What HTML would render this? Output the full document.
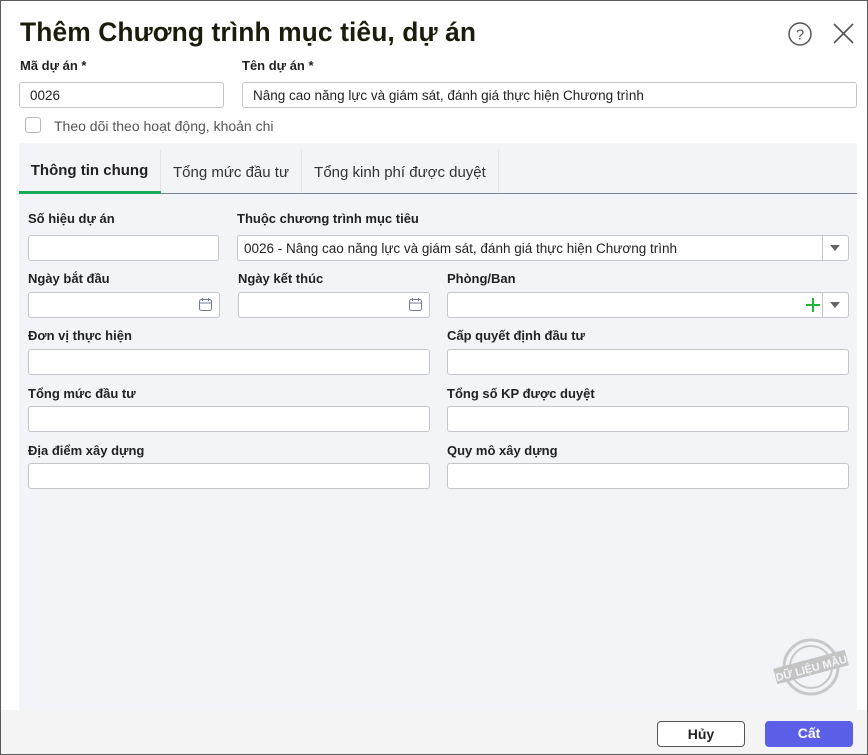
<!DOCTYPE html>
<html><head><meta charset="utf-8"><style>
*{box-sizing:border-box;margin:0;padding:0}
body{width:868px;height:755px;overflow:hidden;background:#fff;font-family:"Liberation Sans",Arial,sans-serif;color:#1f1f1f;position:relative}
.frame{position:absolute;left:0;top:0;width:868px;height:755px;border:1px solid #5a5a5a}
.a{position:absolute}
.t{position:absolute;font-size:26.4px;font-weight:bold;left:20px;top:17px;color:#1c1c0c;letter-spacing:.1px}
.l{position:absolute;font-size:13px;font-weight:bold;color:#222}
.i{position:absolute;height:26px;background:#fff;border:1px solid #c4c6cc;border-radius:3px;font-size:13.5px;padding:5px 10px;color:#222;white-space:nowrap;overflow:hidden}
.panel{position:absolute;left:19px;top:143px;width:838px;height:567px;background:#f3f4f8}
.tab{position:absolute;top:150px;height:44px;font-size:15px;color:#333;padding-top:12px;text-align:center;border-right:1px solid #e2e4ea}
.btn{position:absolute;top:721px;width:88px;height:26px;border-radius:4px;font-size:14px;font-weight:bold;text-align:center;line-height:24px}
</style></head><body>
<div class="t">Thêm Chương trình mục tiêu, dự án</div>
<svg class="a" style="left:788px;top:22px" width="24" height="24" viewBox="0 0 24 24"><circle cx="12" cy="12" r="11" fill="none" stroke="#555" stroke-width="1.5"/><text x="12" y="17.5" font-size="15" text-anchor="middle" fill="#555" font-family="Liberation Sans">?</text></svg>
<svg class="a" style="left:833px;top:23px" width="21" height="21" viewBox="0 0 21 21"><path d="M1 1L20 20M20 1L1 20" stroke="#555" stroke-width="1.6"/></svg>
<div class="l" style="left:20px;top:58px">Mã dự án *</div>
<div class="l" style="left:242px;top:58px">Tên dự án *</div>
<div class="i" style="left:19px;top:82px;width:205px">0026</div>
<div class="i" style="left:242px;top:82px;width:615px">Nâng cao năng lực và giám sát, đánh giá thực hiện Chương trình</div>
<div class="a" style="left:25px;top:117px;width:16px;height:16px;border:1px solid #b5b8c0;border-radius:3px"></div>
<div class="a" style="left:54px;top:118px;font-size:14px;color:#555">Theo dõi theo hoạt động, khoản chi</div>
<div class="panel"></div>
<div class="tab" style="left:19px;width:142px;font-weight:bold;color:#222">Thông tin chung</div>
<div class="tab" style="left:161px;width:141px;padding-top:14px">Tổng mức đầu tư</div>
<div class="tab" style="left:302px;width:197px;padding-top:14px">Tổng kinh phí được duyệt</div>
<div class="a" style="left:19px;top:193px;width:838px;height:1px;background:#7a8296"></div>
<div class="a" style="left:19px;top:191px;width:142px;height:3px;background:#1aaa55"></div>

<div class="l" style="left:28px;top:211px">Số hiệu dự án</div>
<div class="l" style="left:237px;top:211px">Thuộc chương trình mục tiêu</div>
<div class="i" style="left:28px;top:235px;width:191px"></div>
<div class="i" style="left:237px;top:235px;width:612px;padding-left:6px">0026 - Nâng cao năng lực và giám sát, đánh giá thực hiện Chương trình</div>
<div class="a" style="left:822px;top:236px;width:1px;height:24px;background:#c4c6cc"></div>
<div class="a" style="left:830px;top:245px;border:5px solid transparent;border-top:6px solid #666;border-bottom:0"></div>

<div class="l" style="left:28px;top:271px">Ngày bắt đầu</div>
<div class="l" style="left:238px;top:271px">Ngày kết thúc</div>
<div class="l" style="left:447px;top:271px">Phòng/Ban</div>
<div class="i" style="left:28px;top:292px;width:192px"></div>
<div class="i" style="left:238px;top:292px;width:192px"></div>
<div class="i" style="left:447px;top:292px;width:402px"></div>
<svg class="a" style="left:198px;top:297px" width="15" height="15" viewBox="0 0 15 15"><rect x="1.5" y="2.5" width="12" height="11" rx="2" fill="none" stroke="#707898"/><path d="M4.5 1v3M10.5 1v3M1.5 6h12" stroke="#707898"/></svg>
<svg class="a" style="left:408px;top:297px" width="15" height="15" viewBox="0 0 15 15"><rect x="1.5" y="2.5" width="12" height="11" rx="2" fill="none" stroke="#707898"/><path d="M4.5 1v3M10.5 1v3M1.5 6h12" stroke="#707898"/></svg>
<svg class="a" style="left:806px;top:298px" width="14" height="14" viewBox="0 0 14 14"><path d="M7 0v14M0 7h14" stroke="#22b33a" stroke-width="2"/></svg>
<div class="a" style="left:822px;top:293px;width:1px;height:24px;background:#c4c6cc"></div>
<div class="a" style="left:830px;top:302px;border:5px solid transparent;border-top:6px solid #666;border-bottom:0"></div>

<div class="l" style="left:28px;top:328px">Đơn vị thực hiện</div>
<div class="l" style="left:447px;top:328px">Cấp quyết định đầu tư</div>
<div class="i" style="left:28px;top:349px;width:402px"></div>
<div class="i" style="left:447px;top:349px;width:402px"></div>
<div class="l" style="left:28px;top:386px">Tổng mức đầu tư</div>
<div class="l" style="left:447px;top:386px">Tổng số KP được duyệt</div>
<div class="i" style="left:28px;top:406px;width:402px"></div>
<div class="i" style="left:447px;top:406px;width:402px"></div>
<div class="l" style="left:28px;top:443px">Địa điểm xây dựng</div>
<div class="l" style="left:447px;top:443px">Quy mô xây dựng</div>
<div class="i" style="left:28px;top:463px;width:402px"></div>
<div class="i" style="left:447px;top:463px;width:402px"></div>

<svg class="a" style="left:770px;top:635px" width="80" height="65" viewBox="0 0 80 65"><circle cx="41" cy="32" r="27" fill="none" stroke="#c8c8c8" stroke-width="3"/><circle cx="41" cy="32" r="21" fill="none" stroke="#c8c8c8" stroke-width="2"/><g transform="rotate(-15 41 32)"><rect x="4" y="24" width="74" height="16" fill="#c4c4c4"/><text x="41" y="37" font-size="11" font-weight="bold" text-anchor="middle" fill="#f3f4f8" font-family="Liberation Sans">DỮ LIỆU MẪU</text></g></svg>

<div class="a" style="left:1px;top:710px;width:866px;height:44px;background:#f4f4f4"></div>
<div class="btn" style="left:657px;background:#fff;border:1px solid #555;color:#222">Hủy</div>
<div class="btn" style="left:765px;background:#5b5fe8;color:#fff">Cất</div>
<div class="frame"></div>
</body></html>
